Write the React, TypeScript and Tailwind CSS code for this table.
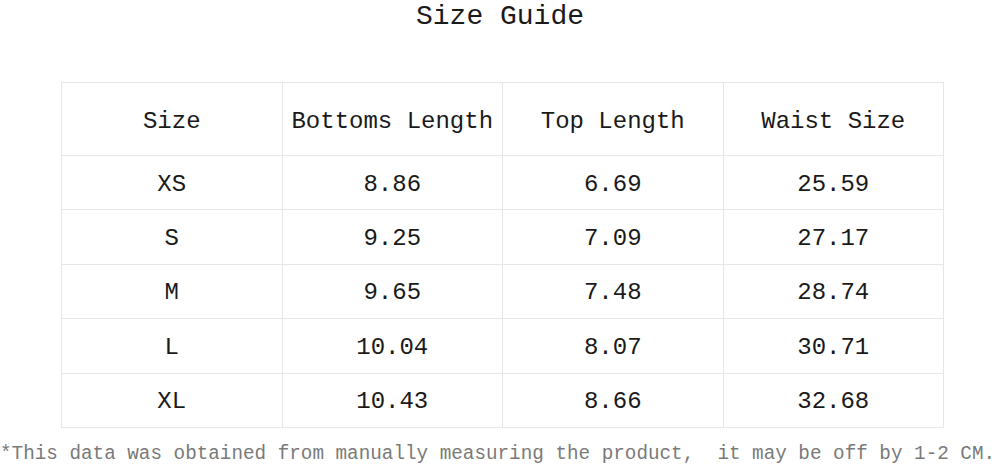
import React from "react";

const rows = [
  ["XS", "8.86", "6.69", "25.59"],
  ["S", "9.25", "7.09", "27.17"],
  ["M", "9.65", "7.48", "28.74"],
  ["L", "10.04", "8.07", "30.71"],
  ["XL", "10.43", "8.66", "32.68"],
];

const headers = ["Size", "Bottoms Length", "Top Length", "Waist Size"];

const font = { fontFamily: '"Liberation Mono", "Noto Sans CJK SC", monospace' };

export default function App() {
  return (
    <div className="w-[1000px] h-[466px] bg-white text-[#1a1a1a] overflow-hidden" style={font}>
      <h1 className="h-[82px] pt-[2px] text-center text-[28px] leading-[30px] font-normal">
        Size Guide
      </h1>
      <table className="ml-[61px] w-[883px] border-collapse table-fixed">
        <thead>
          <tr className="h-[73px]">
            {headers.map((h) => (
              <th
                key={h}
                className="border border-[#e6e6e6] font-normal text-[24px] text-center align-middle pt-[5px]"
              >
                {h}
              </th>
            ))}
          </tr>
        </thead>
        <tbody>
          {rows.map((r) => (
            <tr key={r[0]} className="h-[54.4px]">
              {r.map((c, i) => (
                <td
                  key={i}
                  className="border border-[#e6e6e6] text-[24px] text-center align-middle leading-none pt-[4px]"
                >
                  {c}
                </td>
              ))}
            </tr>
          ))}
        </tbody>
      </table>
      <p className="mt-[13px] text-[19.3px] leading-[26px] text-[#7a7a7a] whitespace-pre">
        *This data was obtained from manually measuring the product,  it may be off by 1-2 CM.
      </p>
    </div>
  );
}
